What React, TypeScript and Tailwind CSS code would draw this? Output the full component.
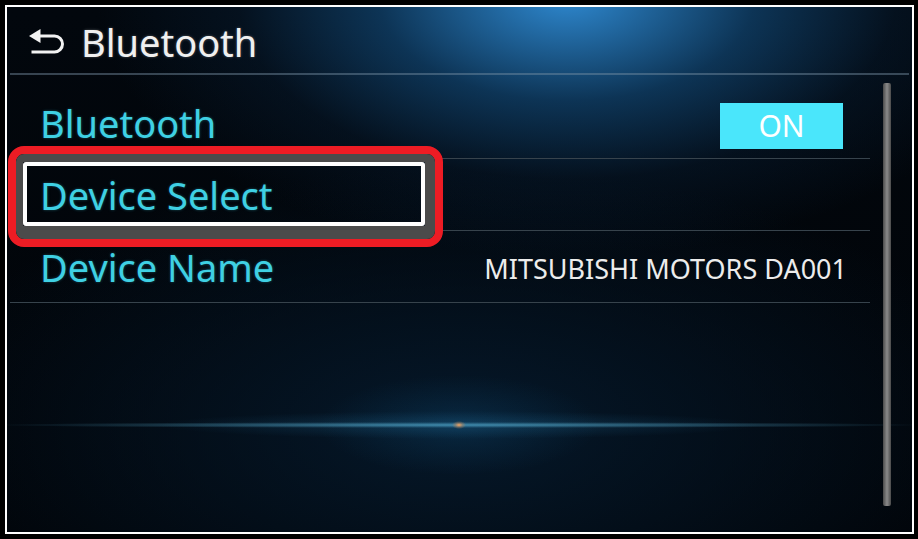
import { ReactNode } from "react";

const screenBg =
  "bg-[radial-gradient(ellipse_7px_4px_at_452px_418px,#f0a060,rgba(224,138,74,0.4)_50%,transparent),radial-gradient(ellipse_470px_3px_at_452px_418px,rgba(90,180,215,0.65),transparent),radial-gradient(ellipse_300px_14px_at_452px_418px,rgba(40,130,180,0.25),transparent),radial-gradient(ellipse_140px_50px_at_452px_418px,rgba(20,100,150,0.22),transparent),radial-gradient(ellipse_470px_260px_at_560px_-10px,#2e88cf,rgba(20,82,134,0.6)_40%,rgba(10,40,70,0.3)_70%,transparent),radial-gradient(ellipse_560px_260px_at_452px_420px,#05182a,transparent),linear-gradient(#02070d,#010408)]";

function BackIcon() {
  return (
    <svg width="37" height="26" viewBox="0 0 37 26" className="shrink-0">
      <polygon points="0,7 11.5,0 11.5,14" fill="#f2f2f2" />
      <path d="M10 7 H25.5 A8 8 0 0 1 25.5 23 H2.5" fill="none" stroke="#f2f2f2" strokeWidth="3" />
    </svg>
  );
}

function Row({ label, children }: { label: string; children?: ReactNode }) {
  return (
    <div className="relative flex items-center justify-between h-[72px] pl-[30px] pr-[27px] border-b border-[#37434c]">
      <span className="text-[38px] leading-none text-[#3fd0e3] [text-shadow:0_0_3px_rgba(64,208,227,0.35)]">
        {label}
      </span>
      {children}
    </div>
  );
}

export default function App() {
  return (
    <div
      className="w-[918px] h-[539px] bg-black pt-[5px] pl-[5px] pr-[4px] pb-[5px]"
      style={{ fontFamily: '"Noto Sans", "Open Sans", sans-serif' }}
    >
      <div className={`relative h-full border-2 border-white overflow-hidden ${screenBg}`}>
        {/* header */}
        <div className="flex items-center gap-[15px] h-[66px] pl-[22px] pt-[3px]">
          <BackIcon />
          <span className="text-[38px] leading-none text-[#f0f0f0] [text-shadow:0_0_3px_rgba(255,255,255,0.3)]">
            Bluetooth
          </span>
        </div>
        <div className="mx-[3px] h-[2px] bg-[rgba(120,145,165,0.45)]" />

        <div className="flex pl-[3px] pr-[21px]">
          <div className="flex-1 pt-[12px]">
            <Row label="Bluetooth">
              <div className="w-[123px] h-[46px] bg-[#4ae6fb] flex items-center justify-center text-[30px] leading-none text-white mt-[7px]">
                ON
              </div>
            </Row>
            <Row label="Device Select">
              {/* highlight annotation */}
              <div className="absolute left-[-2px] top-[-13px] w-[435px] h-[101px] border-[8px] border-[#ed1c24] rounded-[16px] pointer-events-none">
                <div className="h-full border-[#4b4b4b] border-t-[8px] border-l-[7px] border-r-[10px] border-b-[13px] rounded-[8px]">
                  <div className="h-full border-[4px] border-white rounded-[3px]" />
                </div>
              </div>
            </Row>
            <Row label="Device Name">
              <span className="text-[27px] leading-none text-[#ececec] mr-[-4px] mt-[4px]">
                MITSUBISHI MOTORS DA001
              </span>
            </Row>
          </div>
          <div className="w-[8px] h-[423px] mt-[8px] ml-[13px] rounded-[2px] bg-[linear-gradient(90deg,#4a4a4a,#8a8a8a,#4a4a4a)]" />
        </div>
      </div>
    </div>
  );
}
